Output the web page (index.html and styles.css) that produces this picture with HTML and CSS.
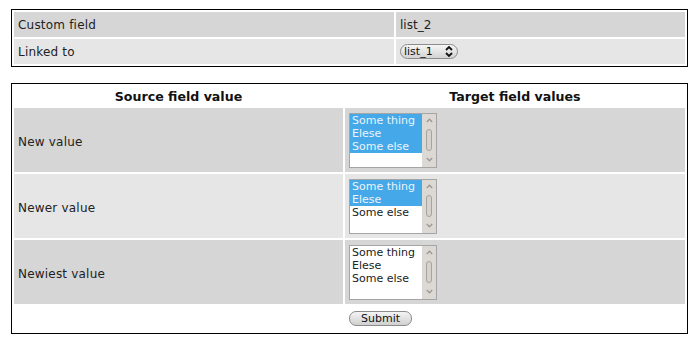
FILE: index.html
```html
<!DOCTYPE html>
<html lang="en">
<head>
	<meta charset="UTF-8">
	<title>Linked custom field</title>
	<link rel="stylesheet" href="styles.css">
</head>
<body>
	<table class="props">
		<tr class="dark">
			<td class="c1">Custom field</td>
			<td>list_2</td>
		</tr>
		<tr class="light">
			<td class="c1">Linked to</td>
			<td>
				<span class="combo">list_1
					<svg width="8" height="11" viewBox="0 0 8 11"><path d="M1 4 L4 1 L7 4 M1 7 L4 10 L7 7" fill="none" stroke="#111" stroke-width="1.8"/></svg>
				</span>
			</td>
		</tr>
	</table>

	<table class="links">
		<tr class="head">
			<th class="c1">Source field value</th>
			<th>Target field values</th>
		</tr>
		<tr class="dark">
			<td class="c1">New value</td>
			<td>
				<div class="listbox">
					<div class="options">
						<div class="opt sel">Some thing</div>
						<div class="opt sel">Elese</div>
						<div class="opt sel">Some else</div>
					</div>
					<div class="scroll">
						<div class="arrow"><svg width="7" height="5" viewBox="0 0 7 5"><path d="M0.8 4 L3.5 1.2 L6.2 4" fill="none" stroke="#9a9894" stroke-width="1.3"/></svg></div>
						<div class="thumb"></div>
						<div class="arrow"><svg width="7" height="5" viewBox="0 0 7 5"><path d="M0.8 1 L3.5 3.8 L6.2 1" fill="none" stroke="#9a9894" stroke-width="1.3"/></svg></div>
					</div>
				</div>
			</td>
		</tr>
		<tr class="light">
			<td class="c1">Newer value</td>
			<td>
				<div class="listbox">
					<div class="options">
						<div class="opt sel">Some thing</div>
						<div class="opt sel">Elese</div>
						<div class="opt">Some else</div>
					</div>
					<div class="scroll">
						<div class="arrow"><svg width="7" height="5" viewBox="0 0 7 5"><path d="M0.8 4 L3.5 1.2 L6.2 4" fill="none" stroke="#9a9894" stroke-width="1.3"/></svg></div>
						<div class="thumb"></div>
						<div class="arrow"><svg width="7" height="5" viewBox="0 0 7 5"><path d="M0.8 1 L3.5 3.8 L6.2 1" fill="none" stroke="#9a9894" stroke-width="1.3"/></svg></div>
					</div>
				</div>
			</td>
		</tr>
		<tr class="dark">
			<td class="c1">Newiest value</td>
			<td>
				<div class="listbox">
					<div class="options">
						<div class="opt">Some thing</div>
						<div class="opt">Elese</div>
						<div class="opt">Some else</div>
					</div>
					<div class="scroll">
						<div class="arrow"><svg width="7" height="5" viewBox="0 0 7 5"><path d="M0.8 4 L3.5 1.2 L6.2 4" fill="none" stroke="#9a9894" stroke-width="1.3"/></svg></div>
						<div class="thumb"></div>
						<div class="arrow"><svg width="7" height="5" viewBox="0 0 7 5"><path d="M0.8 1 L3.5 3.8 L6.2 1" fill="none" stroke="#9a9894" stroke-width="1.3"/></svg></div>
					</div>
				</div>
			</td>
		</tr>
		<tr class="foot">
			<td class="c1"></td>
			<td><button class="submit" type="button">Submit</button></td>
		</tr>
	</table>
</body>
</html>
```

FILE: styles.css
```css
body{
	margin:0;
	padding:9px 10px 0 11px;
	font:12px "DejaVu Sans", sans-serif;
	color:#222;
	background:#fff;
}
table{
	width:677px;
	border:1px solid #000;
	border-spacing:2px;
}
td, th{
	padding:0 4px;
	text-align:left;
}
.dark td{
	background:#d6d6d6;
}
.light td{
	background:#e6e6e6;
}
.props{
	margin-bottom:16px;
}
.props td{
	height:25px;
}
.props td.c1{
	width:372px;
	height:24px;
	padding-top:1px;
	letter-spacing:0.2px;
}
.links .c1{
	width:321px;
}
.links th{
	height:20px;
	text-align:center;
	font-weight:bold;
	font-size:12.6px;
	color:#111;
}
.links td{
	height:64px;
}
.links td.c1{
	height:61px;
	padding-top:3px;
	letter-spacing:0.2px;
}
.links .foot td,
.links .foot td.c1{
	height:25px;
	padding-top:0;
}

/* dropdown */
.combo{
	display:inline-flex;
	align-items:center;
	justify-content:space-between;
	box-sizing:border-box;
	width:58px;
	height:15px;
	padding:0 4px 0 3px;
	border:1px solid #8c8c8c;
	border-radius:8px;
	background:linear-gradient(#f6f6f6, #d2d2d2);
	font-size:11px;
	color:#111;
	vertical-align:middle;
}

/* multi select list */
.listbox{
	display:flex;
	box-sizing:border-box;
	width:88px;
	height:55px;
	border:1px solid #a5a5a5;
	background:#fff;
}
.options{
	flex:1;
}
.opt{
	height:13px;
	line-height:13px;
	font-size:11px;
	padding-left:2px;
	white-space:nowrap;
	color:#222;
}
.opt.sel{
	background:#45a8e8;
	color:#eaf4fd;
}
.scroll{
	width:14px;
	background:#dcd9d4;
	display:flex;
	flex-direction:column;
	align-items:center;
	justify-content:space-between;
}
.arrow{
	height:14px;
	display:flex;
	align-items:center;
	justify-content:center;
}
.thumb{
	box-sizing:border-box;
	width:6px;
	height:22px;
	border:1px solid #a6a39e;
	border-radius:3px;
	background:#d6d3ce;
}

/* button */
.submit{
	box-sizing:border-box;
	width:63px;
	height:15px;
	padding:0;
	border:1px solid #8c8c8c;
	border-radius:7px;
	background:linear-gradient(#f4f4f4, #d0d0d0);
	font:11px "DejaVu Sans", sans-serif;
	color:#111;
	vertical-align:middle;
}
```
